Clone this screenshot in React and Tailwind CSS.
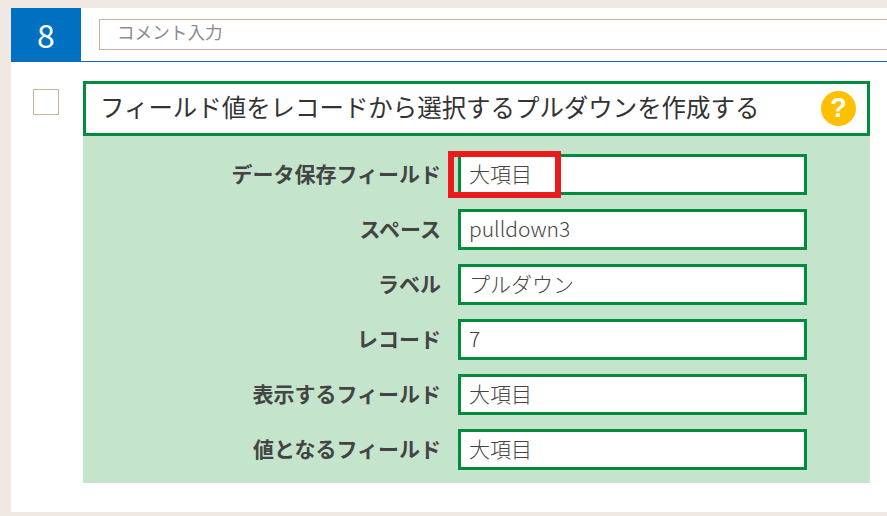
const FONT = { fontFamily: '"Noto Sans CJK JP", "Noto Sans", sans-serif' };

const rows = [
  ["データ保存フィールド", "大項目"],
  ["スペース", "pulldown3"],
  ["ラベル", "プルダウン"],
  ["レコード", "7"],
  ["表示するフィールド", "大項目"],
  ["値となるフィールド", "大項目"],
];

export default function App() {
  return (
    <div className="h-[516px] w-[887px] overflow-hidden bg-[#efe8e3] pt-2 pl-[11px] pb-1" style={FONT}>
      <div className="h-[504px] w-[876px] bg-white">
        <div className="flex h-[54px] items-center border-b border-[#0a6cb5]">
          <div className="flex h-[53px] w-[70px] items-center justify-center bg-[#0070c0] pb-[2px] text-[32px] text-white">8</div>
          <div className="ml-[18px] flex h-[31px] flex-1 items-center border border-r-0 border-[#c9b29b] pb-[4px] pl-[17px] text-[17.6px] text-[#8c8c8c]">コメント入力</div>
        </div>
        <div className="flex pt-[19px] pl-[22px]">
          <div className="mt-2 h-[26px] w-[26px] shrink-0 border border-[#c9b29b] bg-white" />
          <div className="ml-6 w-[787px]">
            <div className="flex h-[55px] items-center justify-between border-[3px] border-[#008c3c] pr-[11px] pl-[14px] text-[24.45px] text-[#333]">
              <span className="pb-[3px]">フィールド値をレコードから選択するプルダウンを作成する</span>
              <span className="flex h-[35px] w-[35px] items-center justify-center rounded-full bg-[#ffc000] text-[27px] leading-none font-bold text-white" style={{ fontFamily: '"Liberation Sans", sans-serif' }}>?</span>
            </div>
            <div className="flex h-[347px] flex-col gap-[14px] bg-[#c4e5cc] pt-[18px]">
              {rows.map(([label, value], i) => (
                <div key={i} className="flex h-[41px] items-center">
                  <div className="w-[358px] pb-[1px] text-right text-[21px] font-bold text-[#444]">{label}</div>
                  <div className="relative ml-[17px] flex h-[41px] w-[349px] items-center border-[3px] border-[#008c3c] bg-white pb-[2px] pl-[8px] text-[21px] font-light text-[#444]">
                    {i === 0 && <div className="absolute top-[-6px] left-[-13px] h-[47px] w-[113px] border-[6px] border-[#e81c1c]" />}
                    <span className="relative">{value}</span>
                  </div>
                </div>
              ))}
            </div>
          </div>
        </div>
      </div>
    </div>
  );
}
